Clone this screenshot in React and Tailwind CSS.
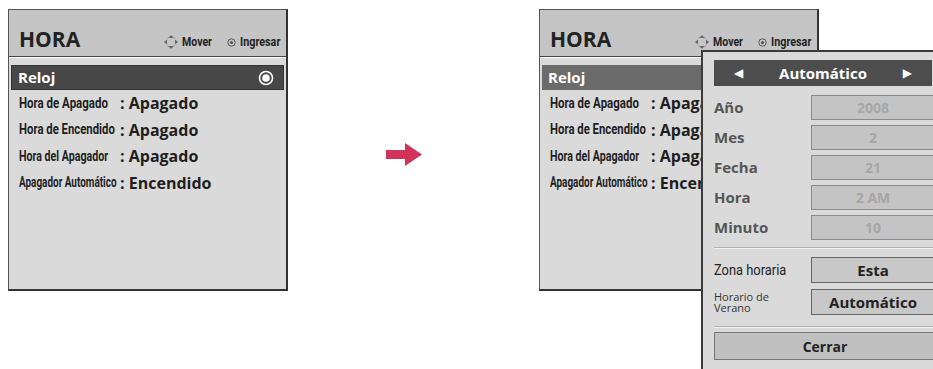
const cond = "font-['Roboto','DejaVu_Sans',sans-serif]";
const sans = "font-['Open_Sans','DejaVu_Sans',sans-serif]";

const MoveIcon = () => (
  <svg width="16" height="16" viewBox="0 0 16 16" className="mr-[3px] shrink-0">
    <path d="M4 4.5 Q8 1 12 4.5 M4 11.5 Q8 15 12 11.5" stroke="#9a9a9a" strokeWidth="1" fill="none" />
    <polygon points="8,1 10.5,4 5.5,4" fill="#666" />
    <polygon points="8,15 10.5,12 5.5,12" fill="#666" />
    <polygon points="1,8 4,5.5 4,10.5" fill="#666" />
    <polygon points="15,8 12,5.5 12,10.5" fill="#666" />
  </svg>
);

const EnterIcon = () => (
  <svg width="9" height="9" viewBox="0 0 9 9" className="mr-[4px] shrink-0">
    <circle cx="4.5" cy="4.5" r="3.7" stroke="#555" strokeWidth="1" fill="none" />
    <circle cx="4.5" cy="4.5" r="1.6" fill="#555" />
  </svg>
);

// labels squeezed like the TV's condensed font
const rows = [
  ["Hora de Apagado", "Apagado", "scale-x-[0.82]"],
  ["Hora de Encendido", "Apagado", "scale-x-[0.81]"],
  ["Hora del Apagador", "Apagado", "scale-x-[0.76]"],
  ["Apagador Automático", "Encendido", "scale-x-[0.71]"],
];

const Panel = ({ dim, children }) => (
  <div className="relative w-[280px] h-[282px] shrink-0 border-l border-t border-[#555] border-r-2 border-b-2 border-r-[#333] border-b-[#333] bg-[#dadada]">
    <div className="h-[47px] bg-[#c5c5c5] border-b border-[#444] flex items-end justify-between pl-[10px] pb-[4px]">
      <span className={`${sans} text-[21px] font-bold text-[#222] leading-none mb-[2px]`}>HORA</span>
      <div className={`${cond} flex items-center text-[12px] font-bold text-[#222] mb-[1px]`}>
        <MoveIcon />
        <span className="w-[45px] whitespace-nowrap">
          <span className="inline-block origin-left scale-x-[0.88]">Mover</span>
        </span>
        <EnterIcon />
        <span className="w-[46px] whitespace-nowrap">
          <span className="inline-block origin-left scale-x-[0.9]">Ingresar</span>
        </span>
      </div>
    </div>
    <div className="border-t border-white pt-[7px] px-[2px]">
      <div className={`h-[25px] ${dim ? "bg-[#6b6b6b]" : "bg-[#474747] border border-[#333]"} flex items-center justify-between pl-[6px] pr-[9px]`}>
        <span className={`${sans} text-[15px] font-bold text-white`}>Reloj</span>
        <svg width="16" height="16" viewBox="0 0 16 16">
          <circle cx="8" cy="8" r="6.5" stroke="white" strokeWidth="1.6" fill="none" />
          <circle cx="8" cy="8" r="3.8" fill="white" />
        </svg>
      </div>
      <div className="pl-[8px]">
        {rows.map(([label, value, squeeze]) => (
          <div key={label} className="h-[26.5px] flex items-center text-[#1e1e1e]">
            <span className={`${cond} w-[101px] shrink-0 text-[14px] font-bold whitespace-nowrap`}>
              <span className={`inline-block origin-left ${squeeze}`}>{label}</span>
            </span>
            <span className={`${sans} text-[16px] font-bold whitespace-nowrap`}>: {value}</span>
          </div>
        ))}
      </div>
    </div>
    {children}
  </div>
);

const fields = [
  ["Año", "2008"],
  ["Mes", "2"],
  ["Fecha", "21"],
  ["Hora", "2 AM"],
  ["Minuto", "10"],
];

const Popup = () => (
  <div className="absolute left-[161px] top-[40px] w-[246px] h-[330px] bg-[#dadada] border-2 border-[#3a3a3a] pl-[11px] pt-[8px] z-10">
    <div className={`${sans} h-[26px] w-[218px] bg-[#4d4d4d] flex items-center justify-between px-[20px] text-white text-[15px] font-bold`}>
      <span className="text-[12px]">◀</span>
      <span>Automático</span>
      <span className="text-[12px]">▶</span>
    </div>
    <div className="pt-[6px]">
      {fields.map(([label, value]) => (
        <div key={label} className="h-[30px] flex items-center">
          <span className={`${sans} w-[97px] text-[15px] font-bold text-[#555]`}>{label}</span>
          <div className={`${sans} w-[124px] h-[25px] bg-[#c4c4c4] border border-[#8a8a8a] flex items-center justify-center text-[14px] font-bold text-[#a6a6a6]`}>{value}</div>
        </div>
      ))}
    </div>
    <div className="mt-[5px] h-[2px] w-[222px] border-t border-[#b0b0b0] border-b border-b-[#f0f0f0]" />
    <div className="mt-[8px] h-[26px] flex items-center">
      <span className={`${cond} w-[97px] text-[14px] text-[#222] whitespace-nowrap`}>
        <span className="inline-block origin-left scale-x-[0.92]">Zona horaria</span>
      </span>
      <div className={`${sans} w-[124px] h-[26px] bg-[#c8c8c8] border border-[#666] flex items-center justify-center text-[15px] font-bold text-[#222]`}>Esta</div>
    </div>
    <div className="mt-[6px] h-[26px] flex items-center">
      <span className={`${sans} w-[97px] text-[11px] leading-[11px] text-[#333]`}>Horario de<br />Verano</span>
      <div className={`${sans} w-[124px] h-[26px] bg-[#c8c8c8] border border-[#666] flex items-center justify-center text-[15px] font-bold text-[#222]`}>Automático</div>
    </div>
    <div className="mt-[11px] h-[2px] w-[222px] border-t border-[#b0b0b0] border-b border-b-[#f0f0f0]" />
    <div className={`${sans} mt-[4px] w-[222px] h-[28px] bg-[#c0c0c0] border border-[#777] flex items-center justify-center text-[14px] font-bold text-[#222]`}>Cerrar</div>
  </div>
);

export default function App() {
  return (
    <div className="w-[933px] h-[369px] overflow-hidden bg-white relative">
      <div className="flex items-start pt-[9px] pl-[8px]">
        <Panel />
        <div className="w-[98px] shrink-0" />
        <div className="pt-[134px] shrink-0">
          <svg width="37" height="24" viewBox="0 0 37 24">
            <rect x="0" y="7" width="20" height="9" fill="#d2335a" />
            <polygon points="19,0 36,11.5 19,23" fill="#d2335a" />
          </svg>
        </div>
        <div className="w-[116px] shrink-0" />
        <Panel dim>
          <Popup />
        </Panel>
      </div>
    </div>
  );
}
